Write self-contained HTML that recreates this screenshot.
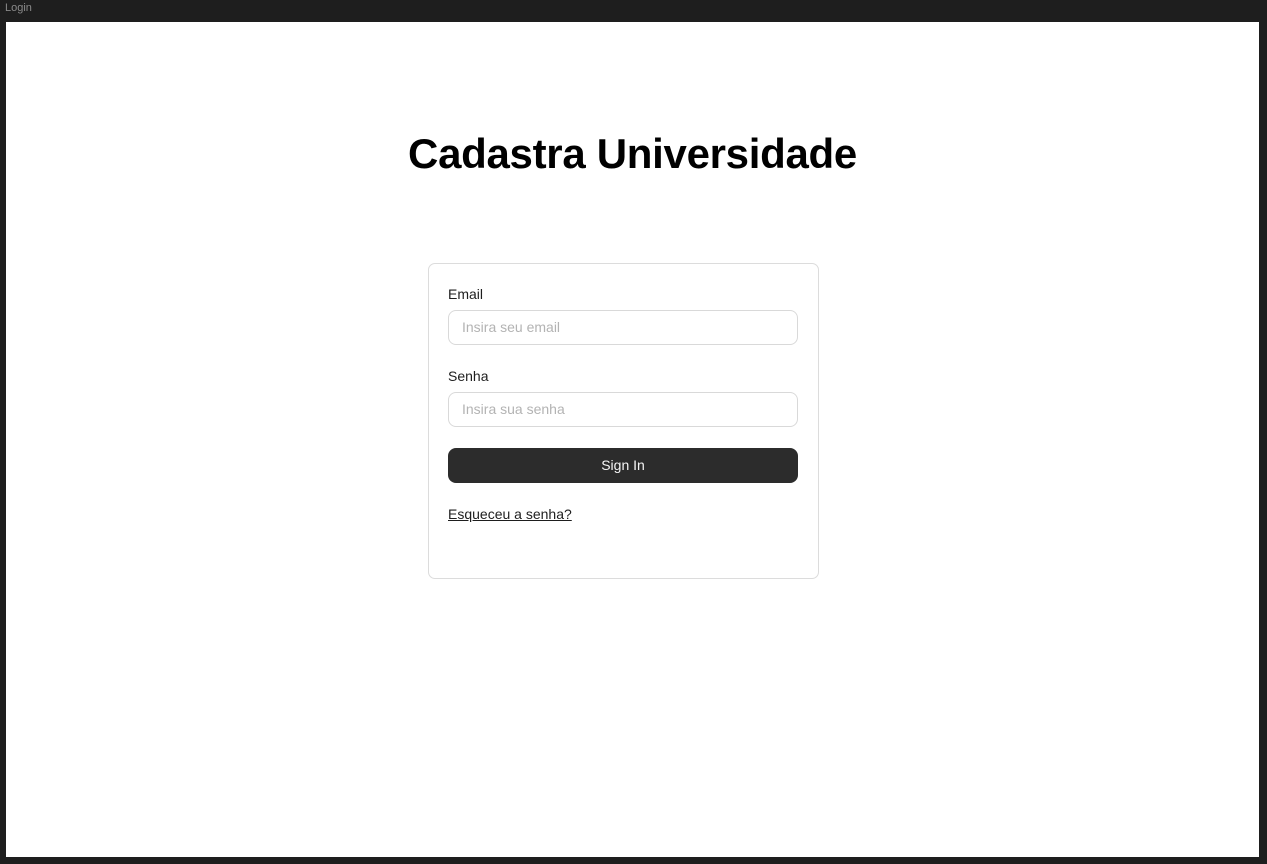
<!DOCTYPE html>
<html><head><meta charset="utf-8"><style>
*{box-sizing:border-box;margin:0;padding:0}
body{width:1267px;height:864px;background:#1e1e1e;font-family:"Liberation Sans",sans-serif;position:relative;overflow:hidden}
.tab{position:absolute;left:5px;top:2px;font-size:11px;color:#8a8a8a}
.frame{position:absolute;left:6px;top:22px;width:1253px;height:835px;background:#fff}
h1{position:absolute;left:0;width:1253px;top:108px;text-align:center;font-size:42px;font-weight:bold;color:#000;letter-spacing:-0.3px}
.card{position:absolute;left:422px;top:241px;width:391px;height:316px;border:1px solid #dcdcdc;border-radius:7px}
.lab{position:absolute;left:19px;font-size:14px;color:#1e1e1e}
.inp{position:absolute;left:19px;width:350px;height:35px;border:1px solid #d9d9d9;border-radius:8px;font-size:14px;color:#b3b3b3;padding-left:13px;line-height:33px}
.btn{position:absolute;left:19px;top:184px;width:350px;height:35px;background:#2c2c2c;border-radius:8px;color:#f5f5f5;font-size:14px;text-align:center;line-height:35px}
.lnk{position:absolute;left:19px;top:242px;font-size:14px;color:#1e1e1e;text-decoration:underline}
</style></head><body>
<div class="tab">Login</div>
<div class="frame">
<h1>Cadastra Universidade</h1>
<div class="card">
<div class="lab" style="top:22px">Email</div>
<div class="inp" style="top:46px">Insira seu email</div>
<div class="lab" style="top:104px">Senha</div>
<div class="inp" style="top:128px">Insira sua senha</div>
<div class="btn">Sign In</div>
<div class="lnk">Esqueceu a senha?</div>
</div>
</div>
</body></html>
